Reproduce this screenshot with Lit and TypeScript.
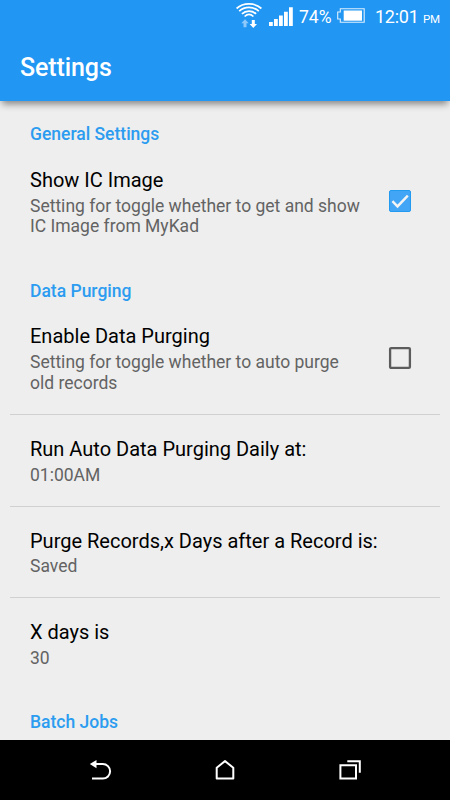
import { LitElement, html, css, nothing } from "lit";
import { customElement, property } from "lit/decorators.js";

const base = css`
  * { box-sizing: border-box; }
  svg { display: block; }
`;

@customElement("status-bar")
class StatusBar extends LitElement {
  static styles = [base, css`
    :host { display: flex; height: 31px; justify-content: flex-end; align-items: flex-start; color: #fff; }
    .icons { flex: none; }
    .time { width: 75px; padding-top: 6px; line-height: 22px; font-size: 18px; letter-spacing: -0.25px; white-space: nowrap; }
    .pm { font-size: 11.5px; letter-spacing: -0.3px; margin-left: 4.5px; }
    .pct { width: 36px; padding-top: 6px; line-height: 22px; font-size: 17.5px; letter-spacing: 0; white-space: nowrap; }
  `];
  render() {
    return html`
      <svg class="icons" width="64" height="31" viewBox="235 0 64 31" fill="none" stroke="#fff">
        <g stroke-width="1.7">
          <path d="M236.6 8.5C243.3 2.4 254.7 2.4 261.4 8.5" />
          <path d="M239.2 11.2C244.5 6.2 253.5 6.2 258.8 11.2" />
          <path d="M241.9 13.9C245.9 10.1 252.1 10.1 256.1 13.9" />
          <path d="M244.6 16.5C247.3 14 250.7 14 253.4 16.5" />
        </g>
        <path d="M245 19.3l3.7 4h-2.2v4h-3v-4h-2.2z" fill="#8ec9fa" stroke="none" />
        <path d="M253.3 27.9l3.7-4h-2.2v-4h-3v4h-2.2z" fill="#fff" stroke="none" />
        <path fill="#fff" stroke="none" d="M269 22h3.8v4H269zM274 19h3.8v7H274zM279 15.5h3.8V26H279zM284 11.7h3.8V26H284zM289 7.3h3.8V26H289z" />
      </svg>
      <div class="pct">74%</div>
      <svg class="icons" width="40" height="31" viewBox="335 0 40 31">
        <path d="M340.3 8.7h23.9v13.6h-23.9v-3.3h-2.6v-7h2.6z" fill="none" stroke="#fff" stroke-opacity=".85" stroke-width="1.1" />
        <path d="M343.7 10.5H362V20.7H343.7z" fill="#fff" />
      </svg>
      <div class="time">12:01<span class="pm">PM</span></div>
    `;
  }
}

@customElement("pref-item")
class PrefItem extends LitElement {
  @property() title = "";
  @property() summary = "";
  @property() check = "";
  static styles = [base, css`
    :host { display: flex; justify-content: space-between; align-items: center; margin: 0 10px; padding: 0 28px 0 20px; height: 91.6px; }
    :host([check]) { height: 112.3px; }
    :host([divided]) { border-top: 1px solid #d0d0d0; }
    .text { width: 335px; padding-top: 2.4px; white-space: nowrap; }
    .title { font-size: 20px; line-height: 24px; color: #000; margin-top: -0.7px; }
    .summary { font-size: 17.5px; line-height: 20.5px; color: #636363; margin-top: 3.7px; white-space: pre; }
    svg { flex: none; }
  `];
  render() {
    return html`
      <div class="text">
        <div class="title">${this.title}</div>
        <div class="summary">${this.summary}</div>
      </div>
      ${this.check === "on" ? html`
        <svg width="24" height="24" viewBox="0 0 24 24">
          <rect x="1.5" y="1.5" width="21" height="21" rx="1.5" fill="#42a5f5" stroke="#219af0" />
          <path d="M4.4 12.2l5.1 5.2L19.8 6.6" fill="none" stroke="#f4f4f4" stroke-width="2.4" />
        </svg>` : this.check === "off" ? html`
        <svg width="24" height="24" viewBox="0 0 24 24">
          <rect x="2.1" y="2.1" width="19.8" height="19.8" rx="1" fill="none" stroke="#5c5c5c" stroke-width="2.3" />
        </svg>` : nothing}
    `;
  }
}

@customElement("app-root")
class AppRoot extends LitElement {
  static styles = [base, css`
    :host { display: flex; flex-direction: column; width: 450px; height: 800px; overflow: hidden; background: #eee; font-family: Roboto, sans-serif; }
    header { flex: none; height: 101px; background: #2196f3; position: relative; box-shadow: 0 5px 7px -2px rgba(0,0,0,.45); }
    h1 { margin: 0; padding: 2px 0 0 20px; font-size: 25px; font-weight: 500; line-height: 70px; height: 70px; color: #fff; letter-spacing: -0.1px; }
    main { flex: 1; overflow: hidden; min-height: 0; }
    h2 { margin: 0; padding: 22.4px 0 0 30px; height: 44.2px; font-size: 17.5px; line-height: 22px; font-weight: 500; color: #2b9cf0; }
    nav { flex: none; height: 60px; background: #000; display: flex; justify-content: space-between; padding: 0 75px; align-items: center; }
  `];
  render() {
    return html`
      <header>
        <status-bar></status-bar>
        <h1>Settings</h1>
      </header>
      <main>
        <h2>General Settings</h2>
        <pref-item check="on" title="Show IC Image" .summary=${"Setting for toggle whether to get and show\nIC Image from MyKad"}></pref-item>
        <h2>Data Purging</h2>
        <pref-item check="off" title="Enable Data Purging" .summary=${"Setting for toggle whether to auto purge\nold records"}></pref-item>
        <pref-item divided title="Run Auto Data Purging Daily at:" summary="01:00AM"></pref-item>
        <pref-item divided title="Purge Records,x Days after a Record is:" summary="Saved"></pref-item>
        <pref-item divided title="X days is" summary="30"></pref-item>
        <h2>Batch Jobs</h2>
      </main>
      <nav>
        <svg width="50" height="60" viewBox="75 740 50 60">
          <path d="M92 778.6h10.8a7.3 7.3 0 0 0 0-14.6H94" fill="none" stroke="#fff" stroke-width="2" />
          <path d="M89.8 764l6.7-4v8.3z" fill="#fff" />
        </svg>
        <svg width="50" height="60" viewBox="200 740 50 60">
          <path d="M216.7 778.6v-10.8l8.3-6.7 8.3 6.7v10.8z" fill="none" stroke="#fff" stroke-width="2" stroke-linejoin="round" />
        </svg>
        <svg width="50" height="60" viewBox="325 740 50 60" fill="none" stroke="#fff">
          <path d="M340.4 765.3h15.6v13.2h-15.6z" stroke-width="2" />
          <path d="M347.3 761.3h12.5v11.5" stroke-width="2" />
        </svg>
      </nav>
    `;
  }
}
